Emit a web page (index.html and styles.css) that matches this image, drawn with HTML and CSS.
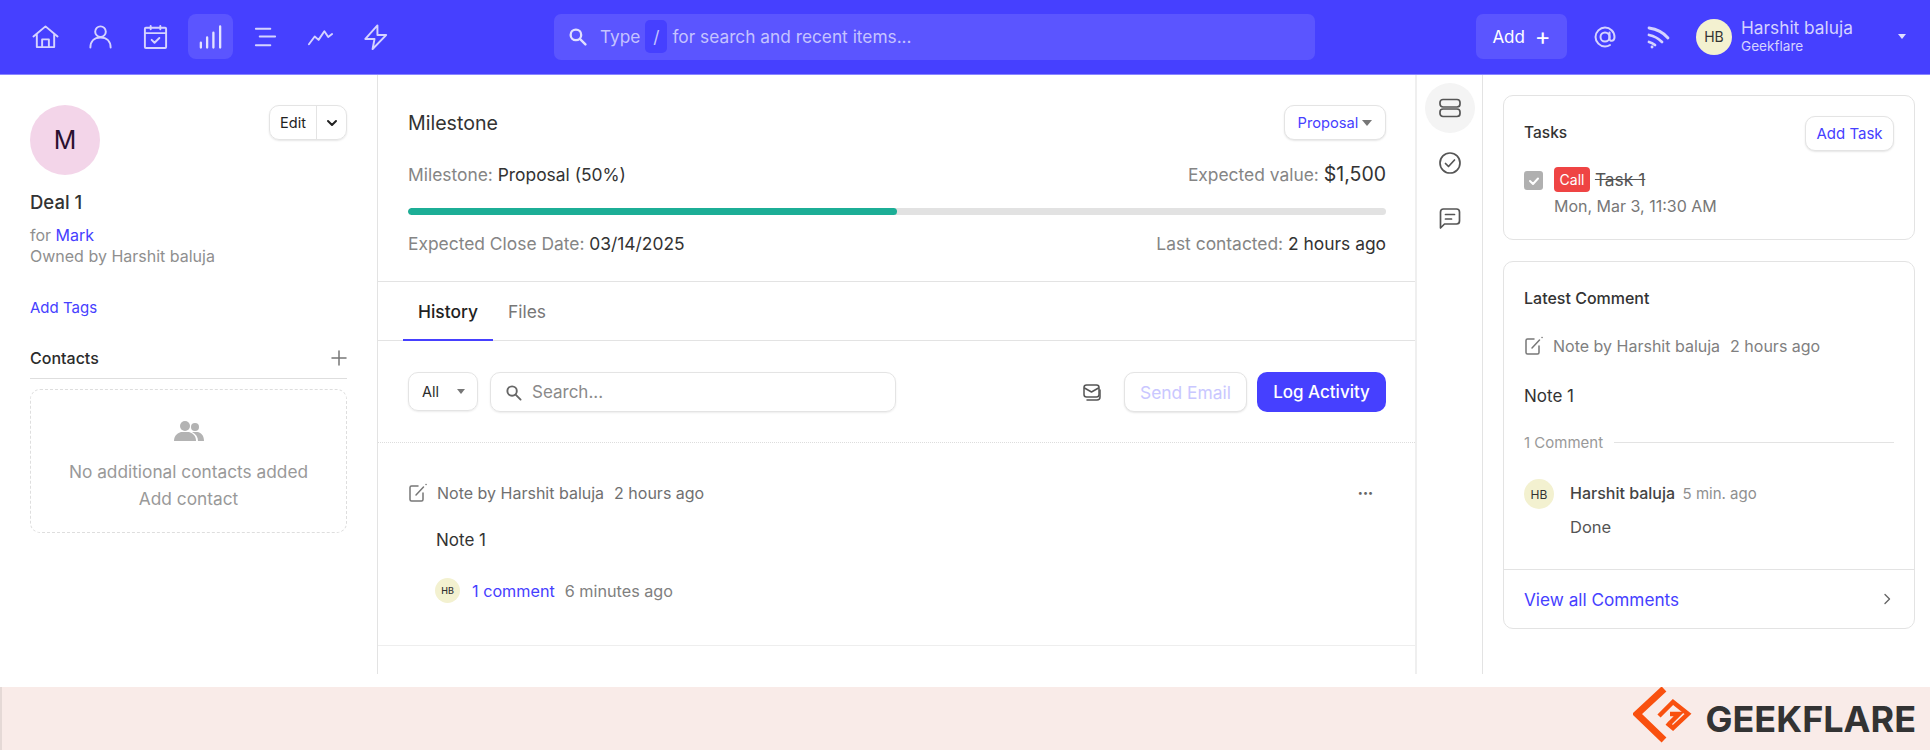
FILE: index.html
```html
<!DOCTYPE html>
<html>
<head>
    <meta charset="utf-8">
    <meta name="viewport" content="width=device-width, initial-scale=1.0">
    <title>Deal 1</title>
    <link rel="stylesheet" href="styles.css">
</head>
<body>
    <header class="topbar">
        <nav class="nav-icons">
            <a class="nav-item"><svg viewBox="0 0 28 28"><path d="M1.500 14 14 3.500 26.500 14M5 11.500V25h18V11.500M10.500 25v-8h7v8"/></svg></a>
            <a class="nav-item"><svg viewBox="0 0 28 28"><circle cx="14" cy="9" r="5.500"/><path d="M3.500 25.500c0-6.500 4-10.500 10.500-10.500s10.500 4 10.500 10.500"/></svg></a>
            <a class="nav-item"><svg viewBox="0 0 28 28"><rect x="3" y="5" width="22" height="21" rx="1"/><path d="M3 10.500h22M9 3v3.500M19 3v3.500M10 17.500l3 3 5-5"/></svg></a>
            <a class="nav-item active"><svg class="bars" viewBox="0 0 28 28"><path d="M4 25.500v-5M10.500 25.500V15M17 25.500V10M24 25.500v-22"/></svg></a>
            <a class="nav-item"><svg viewBox="0 0 28 28"><path d="M4 6h15M8 14h16M4 23h15"/></svg></a>
            <a class="nav-item"><svg viewBox="0 0 28 28"><path d="M2 22l6-8 4 3.500 6-9 4 6 4-3"/></svg></a>
            <a class="nav-item"><svg viewBox="0 0 28 28"><path d="M16 2.500 3.500 16.500H13L11 27l14-14.500h-9z"/></svg></a>
        </nav>
        <div class="global-search">
            <svg class="search-icon" viewBox="0 0 18 18"><circle cx="7.500" cy="7.500" r="5"/><path d="m11.500 11.500 5 5"/></svg>
            <span>Type</span>
            <kbd>/</kbd>
            <span>for search and recent items...</span>
        </div>
        <button class="add-btn">Add <span class="add-plus">+</span></button>
        <svg class="top-icon at-icon" viewBox="0 0 24 24"><circle cx="12" cy="12" r="4.500"/><path d="M16.500 7.500v6c0 3.500 5 3 5-1.500 0-5.500-4.500-9.500-9.500-9.500S2.500 7 2.500 12 7 21.500 12 21.500c2 0 3.500-.5 5-1.500"/></svg>
        <svg class="top-icon rss-icon" viewBox="0 0 24 24"><path d="M3 3c7 1 14 4 19 10M3 10c5 1 9 3 13 7M3 17c2 .5 4 1.500 6 3M6 22h.1"/></svg>
        <div class="avatar avatar-lg">HB</div>
        <div class="user-info">
            <div class="user-name">Harshit baluja</div>
            <div class="user-org">Geekflare</div>
        </div>
        <span class="caret caret-light"></span>
    </header>

    <div class="page">
        <aside class="left-panel">
            <div class="deal-head">
                <div class="deal-avatar">M</div>
                <div class="edit-group">
                    <span class="edit-label">Edit</span>
                    <span class="edit-arrow"><svg viewBox="0 0 12 12"><path d="m2 4 4 4 4-4"/></svg></span>
                </div>
            </div>
            <h1 class="deal-title">Deal 1</h1>
            <div class="deal-meta">for <a class="link">Mark</a></div>
            <div class="deal-meta">Owned by Harshit baluja</div>
            <a class="link add-tags">Add Tags</a>
            <div class="contacts-head">
                <span>Contacts</span>
                <svg viewBox="0 0 16 16"><path d="M8 1v14M1 8h14"/></svg>
            </div>
            <div class="contacts-empty">
                <svg viewBox="0 0 30 22"><circle cx="11" cy="6" r="5"/><path d="M0 21c0-6 4-8 7-9h8c3 1 7 3 7 9z"/><circle cx="21" cy="7" r="4"/><path d="M18 12h6c3 1 6 3 6 9h-6c0-4-2-7-6-9z"/></svg>
                <div>No additional contacts added</div>
                <div>Add contact</div>
            </div>
        </aside>

        <main class="main-panel">
            <section class="milestone">
                <div class="row-between milestone-top">
                    <h2>Milestone</h2>
                    <button class="proposal-btn">Proposal <span class="caret"></span></button>
                </div>
                <div class="row-between">
                    <div class="muted">Milestone: <span class="value">Proposal (50%)</span></div>
                    <div class="muted">Expected value: <span class="value big">$1,500</span></div>
                </div>
                <div class="progress"><div class="progress-fill" style="width: 50%"></div></div>
                <div class="row-between">
                    <div class="muted">Expected Close Date: <span class="value">03/14/2025</span></div>
                    <div class="muted">Last contacted: <span class="value">2 hours ago</span></div>
                </div>
            </section>

            <div class="tabs">
                <a class="tab active">History</a>
                <a class="tab">Files</a>
            </div>

            <div class="toolbar">
                <div class="filter">All <span class="caret"></span></div>
                <div class="search-box">
                    <svg viewBox="0 0 18 18"><circle cx="7.500" cy="7.500" r="5"/><path d="m11.500 11.500 5 5"/></svg>
                    <span>Search...</span>
                </div>
                <svg class="mail-icon" viewBox="0 0 20 20"><rect x="2" y="3" width="15" height="12" rx="2.500"/><path d="m2.500 6 7 4 7-4M5 18h10c2 0 3-1 3-3V8"/></svg>
                <button class="btn-outline">Send Email</button>
                <button class="btn-primary">Log Activity</button>
            </div>

            <article class="activity">
                <div class="activity-head">
                    <svg class="note-icon" viewBox="0 0 20 20"><path d="M10 3H3.500C2.500 3 2 3.500 2 4.500v12c0 1 .5 1.500 1.500 1.500h10c1 0 1.500-.5 1.500-1.500V10M8 12l7.500-8M18 1.500h.1"/></svg>
                    <span>Note by Harshit baluja</span>
                    <span>2 hours ago</span>
                    <span class="more">•••</span>
                </div>
                <div class="activity-body">Note 1</div>
                <div class="activity-foot">
                    <div class="avatar avatar-xs">HB</div>
                    <a class="link">1 comment</a>
                    <span>6 minutes ago</span>
                </div>
            </article>
        </main>

        <div class="rail">
            <a class="rail-item active"><svg viewBox="0 0 24 24"><rect x="2" y="3.500" width="20" height="7.500" rx="3"/><rect x="2" y="13" width="20" height="7.500" rx="3"/></svg></a>
            <a class="rail-item"><svg viewBox="0 0 24 24"><circle cx="12" cy="12" r="10"/><path d="m7.500 12.500 3 3 6-6.500"/></svg></a>
            <a class="rail-item"><svg viewBox="0 0 24 24"><path d="M2.500 22V6c0-2 1-3 3-3h13c2 0 3 1 3 3v9c0 2-1 3-3 3H6.500zM7.500 8.500h9M7.500 13h6"/></svg></a>
        </div>

        <aside class="right-panel">
            <section class="card tasks-card">
                <div class="row-between tasks-head">
                    <h3>Tasks</h3>
                    <button class="add-task">Add Task</button>
                </div>
                <div class="task">
                    <span class="task-check"><svg viewBox="0 0 14 14"><path d="m3 7 3 3 5-5.500"/></svg></span>
                    <div>
                        <div class="task-title"><span class="badge">Call</span> <s>Task 1</s></div>
                        <div class="task-date">Mon, Mar 3, 11:30 AM</div>
                    </div>
                </div>
            </section>

            <section class="card comment-card">
                <div class="comment-inner">
                    <h3>Latest Comment</h3>
                    <div class="comment-note-head">
                        <svg class="note-icon" viewBox="0 0 20 20"><path d="M10 3H3.500C2.500 3 2 3.500 2 4.500v12c0 1 .5 1.500 1.500 1.500h10c1 0 1.500-.5 1.500-1.500V10M8 12l7.500-8M18 1.500h.1"/></svg>
                        <span>Note by Harshit baluja</span>
                        <span>2 hours ago</span>
                    </div>
                    <div class="comment-note">Note 1</div>
                    <div class="comment-count"><span>1 Comment</span><i></i></div>
                    <div class="comment-item">
                        <div class="avatar avatar-md">HB</div>
                        <div>
                            <div class="comment-by"><strong>Harshit baluja</strong> <span>5 min. ago</span></div>
                            <div class="comment-text">Done</div>
                        </div>
                    </div>
                </div>
                <div class="comment-foot">
                    <a class="link">View all Comments</a>
                    <svg viewBox="0 0 12 12"><path d="m4 1.500 4.500 4.500L4 10.500"/></svg>
                </div>
            </section>
        </aside>
    </div>

    <footer class="band">
        <svg class="logo-mark" viewBox="5 5 60 63"><path class="logo-outer" d="M36 7 9 32l27 26"/><path d="M31 34 45 20l15 12-15 14-6-5"/><path d="M42 32h9l-9 9"/></svg>
        <span class="logo-text">GEEKFLARE</span>
    </footer>
</body>
</html>
```

FILE: styles.css
```css
* { box-sizing: border-box; }
html, body { margin: 0; height: 100%; }
body {
    font-family: Inter, "Liberation Sans", sans-serif;
    font-size: 16px;
    color: #2b2b2b;
    background: #fff;
    overflow: hidden;
}
h1, h2, h3 { margin: 0; font-weight: 500; }
button { font-family: inherit; cursor: pointer; }
svg { fill: none; stroke: currentColor; stroke-width: 2; stroke-linecap: round; stroke-linejoin: round; }
.link { color: #4640ff; }
.row-between { display: flex; justify-content: space-between; align-items: center; }
.caret {
    display: inline-block;
    border-left: 4.5px solid transparent;
    border-right: 4.5px solid transparent;
    border-top: 5px solid #777;
}

/* top bar */
.topbar {
    height: 75px;
    background: #4640ff;
    border-bottom: 1px solid #8a86ff;
    display: flex;
    align-items: center;
    padding: 0 18px 1px 23px;
    color: #d5d3ff;
}
.nav-icons { display: flex; gap: 10px; width: 531px; }
.nav-item {
    width: 45px;
    height: 45px;
    border-radius: 8px;
    display: flex;
    align-items: center;
    justify-content: center;
}
.nav-item svg { width: 27px; height: 27px; stroke-width: 2; }
.nav-item svg.bars { stroke-width: 2.400; color: #e4e3ff; }
.nav-item.active { background: #5b55ff; }
.global-search {
    width: 761px;
    height: 46px;
    background: #5b55ff;
    border-radius: 7px;
    display: flex;
    align-items: center;
    padding-left: 14px;
    font-size: 17.300px;
    color: #c5c3ff;
}
.search-icon { width: 19px; height: 19px; margin-right: 13px; stroke-width: 2.200; color: #e0dfff; }
.global-search kbd {
    font-family: inherit;
    width: 22px;
    height: 33px;
    line-height: 33px;
    margin: 0 5px;
    text-align: center;
    background: #4640ff;
    border-radius: 5px;
}
.add-btn {
    width: 91px;
    height: 45px;
    margin-left: 161px;
    background: #5b55ff;
    border: 0;
    border-radius: 7px;
    color: #fff;
    font-size: 17px;
    font-weight: 400;
}
.add-plus { font-size: 24px; line-height: 16px; margin-left: 5px; vertical-align: -2px; }
.top-icon { width: 24px; height: 24px; stroke-width: 2; }
.at-icon { margin-left: 26px; }
.rss-icon { margin-left: 29px; stroke-width: 2.800; }
.avatar {
    border-radius: 50%;
    background: #f3f1d0;
    color: #333;
    display: flex;
    align-items: center;
    justify-content: center;
    flex-shrink: 0;
}
.avatar-lg { width: 36px; height: 36px; margin-left: 26px; font-size: 14px; }
.avatar-md { width: 30px; height: 30px; font-size: 12px; }
.avatar-xs { width: 25px; height: 25px; font-size: 9px; font-weight: 500; }
.user-info { margin-left: 9px; width: 157px; }
.user-name { font-size: 17.300px; line-height: 19px; }
.user-org { font-size: 13.600px; line-height: 19px; }
.caret-light { border-top-color: #e0dfff; }

/* page columns */
.page { display: flex; height: 599px; }
.left-panel {
    width: 378px;
    flex-shrink: 0;
    padding: 30px 30px 0;
    border-right: 1px solid #e3e3e3;
}
.main-panel { width: 1037px; flex-shrink: 0; }
.rail {
    width: 68px;
    flex-shrink: 0;
    border-left: 2px solid #efefef;
    border-right: 1px solid #e3e3e3;
    padding-top: 8px;
    display: flex;
    flex-direction: column;
    align-items: center;
    gap: 5px;
}
.right-panel { flex: 1; padding: 20px 15px 0 20px; }

/* left */
.deal-head { display: flex; justify-content: space-between; align-items: flex-start; }
.deal-avatar {
    width: 70px;
    height: 70px;
    border-radius: 50%;
    background: #f3d5e9;
    color: #2a1030;
    font-size: 25px;
    display: flex;
    align-items: center;
    justify-content: center;
}
.edit-group {
    display: flex;
    width: 78px;
    height: 35px;
    border: 1px solid #e4e4e4;
    border-radius: 10px;
    box-shadow: 0 1px 2px rgba(0, 0, 0, .1);
    color: #222;
    font-size: 14.500px;
}
.edit-label { width: 47px; text-align: center; line-height: 33px; border-right: 1px solid #e4e4e4; }
.edit-arrow { flex: 1; display: flex; align-items: center; justify-content: center; }
.edit-arrow svg { width: 12px; height: 12px; }
.deal-title { font-size: 18.500px; line-height: 24px; margin: 15px 0 11px; color: #333; }
.deal-meta { line-height: 21px; color: #8f8f8f; }
.add-tags { display: block; margin-top: 31px; font-size: 15px; line-height: 20px; }
.contacts-head {
    display: flex;
    justify-content: space-between;
    align-items: center;
    margin-top: 30px;
    padding-bottom: 10px;
    border-bottom: 1px solid #dedede;
    font-weight: 500;
    height: 31px;
}
.contacts-head svg { width: 16px; height: 16px; color: #777; stroke-width: 1.500; }
.contacts-empty {
    margin-top: 10px;
    height: 144px;
    border: 1px dashed #dedede;
    border-radius: 10px;
    display: flex;
    flex-direction: column;
    align-items: center;
    padding-top: 30px;
    font-size: 17.300px;
    line-height: 27px;
    color: #999;
}
.contacts-empty svg { width: 30px; height: 22px; margin-bottom: 16px; fill: #b3b3b3; stroke: none; }

/* milestone */
.milestone { padding: 30px 29px 0 30px; height: 207px; border-bottom: 1px solid #e3e3e3; }
.milestone-top { margin-bottom: 22px; }
.milestone h2 { font-size: 19.600px; font-weight: 400; color: #333; }
.proposal-btn {
    width: 102px;
    height: 35px;
    background: #fff;
    border: 1px solid #e4e4e4;
    border-radius: 10px;
    box-shadow: 0 1px 2px rgba(0, 0, 0, .1);
    color: #4640ff;
    font-size: 14.700px;
    padding: 0;
}
.proposal-btn .caret { border-left-width: 5.500px; border-right-width: 5.500px; border-top-width: 6px; vertical-align: 2px; }
.muted { font-size: 17.400px; line-height: 24px; color: #858585; }
.value { color: #333; }
.value.big { font-size: 19.500px; }
.progress { height: 7px; margin: 21px 0 17px; background: #e2e2e2; border-radius: 4px; overflow: hidden; }
.progress-fill { height: 100%; background: #1cae96; border-radius: 4px; }

/* tabs */
.tabs { display: flex; height: 59px; padding-left: 25px; border-bottom: 1px solid #e3e3e3; }
.tab {
    padding: 19px 15px 0;
    height: 59px;
    font-size: 17.400px;
    color: #777;
}
.tab.active { color: #222; font-weight: 500; border-bottom: 2px solid #4640ff; }
.tab + .tab { padding-left: 0; margin-left: 15px; padding-right: 0; }

/* toolbar */
.toolbar {
    height: 102px;
    padding: 31px 24px 0 30px;
    border-bottom: 1px dotted #ddd;
    display: flex;
    align-items: flex-start;
}
.filter {
    width: 70px;
    height: 39px;
    border: 1px solid #e4e4e4;
    border-radius: 10px;
    display: flex;
    align-items: center;
    justify-content: space-between;
    padding: 0 12px 0 13px;
    box-shadow: 0 1px 2px rgba(0, 0, 0, .08);
    font-size: 14.500px;
}
.search-box {
    width: 406px;
    height: 40px;
    margin-left: 12px;
    border: 1px solid #e4e4e4;
    border-radius: 10px;
    box-shadow: 0 1px 2px rgba(0, 0, 0, .08);
    display: flex;
    align-items: center;
    padding-left: 14px;
    font-size: 17px;
    color: #8a8a8a;
}
.search-box svg { width: 17px; height: 17px; margin-right: 10px; color: #666; }
.mail-icon { width: 20px; height: 20px; margin: 10px 0 0 186px; color: #555; stroke-width: 1.500; }
.btn-outline, .btn-primary { height: 40px; border-radius: 10px; font-size: 17.400px; padding: 0; }
.btn-outline {
    width: 123px;
    margin-left: 22px;
    background: #fff;
    border: 1px solid #e4e4e4;
    box-shadow: 0 1px 2px rgba(0, 0, 0, .1);
    color: #c9c7ff;
}
.btn-primary {
    width: 129px;
    margin-left: 10px;
    background: #4640ff;
    border: 0;
    color: #fff;
    font-weight: 500;
    font-size: 17px;
}

/* activity */
.activity { padding: 38px 24px 0 30px; height: 203px; border-bottom: 1px solid #eee; }
.activity-head { display: flex; align-items: center; gap: 10px; color: #707070; font-size: 16px; line-height: 24px; }
.note-icon { width: 20px; height: 20px; color: #777; stroke-width: 1.500; margin-right: -1px; }
.more { margin-left: auto; margin-right: 18px; font-size: 9px; color: #666; }
.activity-body { margin: 23px 0 0 28px; font-size: 17px; line-height: 24px; color: #333; }
.activity-foot { display: flex; align-items: center; gap: 10px; margin: 26px 0 0 27px; font-size: 16.200px; color: #808080; }
.activity-foot .avatar { margin-right: 2px; }

/* rail */
.rail-item { width: 50px; height: 50px; border-radius: 50%; display: flex; align-items: center; justify-content: center; color: #555; }
.rail-item.active { background: #f4f4f4; }
.rail-item svg { width: 24px; height: 24px; stroke-width: 1.700; }

/* cards */
.card { border: 1px solid #e3e3e3; border-radius: 10px; }
.card h3 { font-size: 16px; color: #333; }
.tasks-card { height: 145px; padding: 20px 20px 0; margin-bottom: 21px; }
.add-task {
    width: 89px;
    height: 35px;
    background: #fff;
    border: 1px solid #e4e4e4;
    border-radius: 10px;
    box-shadow: 0 1px 2px rgba(0, 0, 0, .1);
    color: #4640ff;
    font-size: 15px;
    padding: 0;
}
.tasks-head { align-items: flex-start; }
.tasks-head h3 { margin-top: 7px; line-height: 20px; font-size: 15.500px; }
.task { display: flex; gap: 11px; margin-top: 16px; }
.task-check {
    width: 19px;
    height: 19px;
    margin-top: 4px;
    border-radius: 3px;
    background: #b0b0b0;
    color: #fff;
    display: flex;
    align-items: center;
    justify-content: center;
}
.task-check svg { width: 14px; height: 14px; stroke-width: 2; }
.task-title { font-size: 17.400px; line-height: 25px; color: #555; }
.badge {
    display: inline-block;
    width: 36px;
    height: 25px;
    line-height: 25px;
    text-align: center;
    background: #ef4444;
    color: #fff;
    border-radius: 4px;
    font-size: 14px;
    vertical-align: top;
}
.task-date { font-size: 16px; line-height: 24px; margin-top: 2px; color: #777; }
.comment-card { height: 368px; }
.comment-inner { height: 308px; padding: 27px 20px 0; border-bottom: 1px solid #e3e3e3; }
.comment-inner h3 { line-height: 19px; }
.comment-note-head { display: flex; align-items: center; gap: 10px; margin-top: 28px; font-size: 16px; line-height: 20px; color: #808080; }
.comment-note { font-size: 17px; line-height: 24px; margin-top: 28px; color: #333; }
.comment-count { display: flex; align-items: center; gap: 11px; margin-top: 25px; color: #999; font-size: 15px; line-height: 19px; }
.comment-count i { flex: 1; border-top: 1px solid #e3e3e3; }
.comment-item { display: flex; gap: 16px; margin-top: 27px; }
.comment-by strong { font-weight: 500; color: #444; font-size: 16px; }
.comment-by span { margin-left: 3px; color: #8f8f8f; font-size: 15px; }
.comment-by { line-height: 28px; }
.comment-text { margin-top: 7px; line-height: 24px; font-size: 16.500px; color: #555; }
.comment-foot {
    height: 58px;
    padding: 0 21px 0 20px;
    display: flex;
    align-items: center;
    justify-content: space-between;
    font-size: 17.200px;
}
.comment-foot svg { width: 12px; height: 12px; color: #666; stroke-width: 1.400; }

/* bottom band */
.band {
    height: 63px;
    margin-top: 13px;
    background: #f9ebe8;
    border-left: 2px solid #e5d9d6;
    display: flex;
    align-items: center;
    justify-content: flex-end;
    padding-right: 14px;
}
.logo-mark { width: 60px; height: 63px; color: #f9500f; stroke-width: 4.500; stroke-linecap: butt; stroke-linejoin: miter; margin-right: 12px; }
.logo-mark .logo-outer { stroke-width: 7; }
.logo-text { font-size: 36px; font-weight: 700; color: #333; }
```
